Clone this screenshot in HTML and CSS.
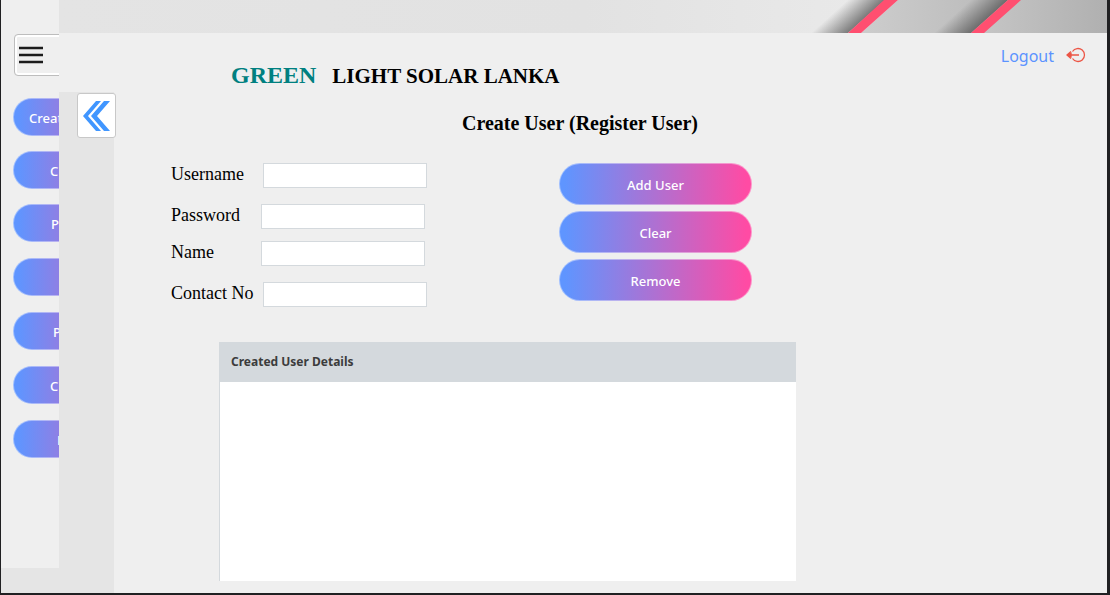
FILE: index.html
```html
<!DOCTYPE html>
<html lang="en">
<head>
<meta charset="utf-8">
<title>Green Light Solar Lanka</title>
<link rel="stylesheet" href="styles.css">
</head>
<body>
<div class="window">
  <aside class="side">
    <nav class="menu">
      <button class="menu-toggle" type="button" aria-label="Menu">
        <svg width="24" height="18" viewBox="0 0 24 18"><path d="M0 2h24M0 9h24M0 16h24" stroke="#1c1c1c" stroke-width="2.4"/></svg>
      </button>
      <div class="menu-list">
        <button class="pill menu-item wide" type="button">Creat</button>
        <button class="pill menu-item" type="button">C</button>
        <button class="pill menu-item mid" type="button">P</button>
        <button class="pill menu-item spaced" type="button"></button>
        <button class="pill menu-item spaced narrow" type="button">P</button>
        <button class="pill menu-item spaced" type="button">C</button>
        <button class="pill menu-item spaced last" type="button">E</button>
      </div>
    </nav>
  </aside>
  <div class="page">
    <div class="banner">
      <svg width="307" height="33" viewBox="800 0 307 33">
        <defs>
          <linearGradient id="mid" gradientUnits="userSpaceOnUse" x1="861" y1="0" x2="971" y2="0"><stop offset="0" stop-color="#cdcdcd"/><stop offset="1" stop-color="#bebebe"/></linearGradient>
          <linearGradient id="end" gradientUnits="userSpaceOnUse" x1="990" y1="0" x2="1107" y2="0"><stop offset="0" stop-color="#c4c4c4"/><stop offset="1" stop-color="#b0b0b0"/></linearGradient>
          <linearGradient id="shade1" gradientUnits="userSpaceOnUse" x1="830" y1="16" x2="848" y2="36"><stop offset="0" stop-color="#707070" stop-opacity="0"/><stop offset="1" stop-color="#707070"/></linearGradient>
          <linearGradient id="shade2" gradientUnits="userSpaceOnUse" x1="953" y1="16" x2="971" y2="36"><stop offset="0" stop-color="#666" stop-opacity="0"/><stop offset="1" stop-color="#666"/></linearGradient>
        </defs>
        <path d="M861 33L898 0H1107V33z" fill="url(#mid)"/>
        <path d="M984 33L1021 0H1107V33z" fill="url(#end)"/>
        <path d="M808 33L844 0H885L848 33z" fill="url(#shade1)"/>
        <path d="M931 33L967 0H1008L971 33z" fill="url(#shade2)"/>
        <path d="M848 33L884 0H898L861 33zM971 33L1008 0H1021L984 33z" fill="#ff4f70"/>
      </svg>
    </div>
    <header class="top">
      <h1 class="brand"><span class="brand-green">GREEN</span><span class="brand-rest">LIGHT SOLAR LANKA</span></h1>
      <a class="logout" href="#">Logout
        <svg width="20" height="16" viewBox="0 0 20 16" fill="none" stroke="#ec5545" stroke-width="1.3"><path d="M1 8H13M5 4.500L1 8L5 11.500M2.500 8L5 6.500V9.500zM6.500 4.500A6.500 6.500 0 1 1 6.500 11.500"/></svg>
      </a>
    </header>
    <div class="body">
      <div class="rail">
        <button class="back" type="button" aria-label="Back">
          <svg width="28" height="30" viewBox="0 0 28 30" fill="#4096ff"><path d="M13 0h5L5 15L18 30h-5L0 15z"/><path d="M21 0h6L14 15L27 30h-6L8 15z"/></svg>
        </button>
      </div>
      <main class="content">
        <h2 class="title">Create User (Register User)</h2>
        <form class="form">
          <div class="fields">
            <div class="field"><label for="username">Username</label><input id="username" type="text"></div>
            <div class="field near"><label for="password">Password</label><input id="password" type="password"></div>
            <div class="field near tight"><label for="name">Name</label><input id="name" type="text"></div>
            <div class="field"><label for="contact">Contact No</label><input id="contact" type="text"></div>
          </div>
          <div class="actions">
            <button class="pill action" type="button">Add User</button>
            <button class="pill action" type="button">Clear</button>
            <button class="pill action" type="button">Remove</button>
          </div>
        </form>
        <section class="details">
          <h3 class="details-title">Created User Details</h3>
        </section>
      </main>
    </div>
  </div>
</div>
</body>
</html>
```

FILE: styles.css
```css
* { box-sizing: border-box; }
body { margin: 0; font-family: "Noto Sans", sans-serif; background: #202022; }
button { font: inherit; }
svg { display: block; }

.window {
  display: flex;
  min-height: 100vh;
  border: solid #202022;
  border-width: 0 3px 2px 1px;
  background: #efefef;
}

.side { display: flex; width: 58px; flex: none; padding-bottom: 25px; background: #e5e5e5; }
.menu { width: 100%; padding-top: 34px; overflow: hidden; background: #efefef; }
.menu-toggle {
  display: flex;
  align-items: center;
  width: 60px;
  height: 42px;
  margin-left: 13px;
  padding: 0 4px;
  border: 1px solid #bdbdbd;
  border-radius: 4px;
  background: #efefef;
  box-shadow: inset 0 0 0 2px #fff;
}
.menu-list { display: flex; flex-direction: column; gap: 15px; margin: 22px 0 0 12px; }

.pill {
  border: 1px solid rgba(255, 255, 255, 0.4);
  border-radius: 21px;
  background: linear-gradient(90deg, #5f95ff 3%, #ff4ba4 97%) border-box;
  color: #fff;
  font-size: 13px;
  font-weight: 500;
  white-space: nowrap;
}
.menu-item { width: 152px; height: 38px; padding: 2px 0 0 36px; text-align: left; }
.menu-item.spaced { margin-top: 1px; }
.menu-item.wide { padding-left: 15px; }
.menu-item.mid { padding-left: 37px; }
.menu-item.narrow { padding-left: 39px; }
.menu-item.last { padding-left: 43px; }

.page { display: flex; flex: 1; flex-direction: column; min-width: 0; }
.banner {
  display: flex;
  justify-content: flex-end;
  height: 33px;
  background: linear-gradient(90deg, #e4e4e4, #e2e2e2 50%, #eaeaea 80%);
}
.top { display: flex; justify-content: space-between; height: 59px; padding: 0 21px 0 172px; }
.brand { display: flex; align-items: baseline; gap: 16px; margin: 26px 0 0; font-family: "Liberation Serif", serif; line-height: 32px; }
.brand-green { color: #008080; font-size: 24px; }
.brand-rest { font-size: 21px; }
.logout { display: flex; gap: 12px; height: 24px; margin-top: 11px; color: #5b93ff; font-size: 16px; line-height: 24px; text-decoration: none; }
.logout svg { margin-top: 3px; }

.body { display: flex; flex: 1; }
.rail { flex: none; width: 55px; padding: 1px 0 0 18px; background: #e5e5e5; }
.back {
  display: grid;
  place-items: center;
  width: 39px;
  height: 45px;
  padding: 0;
  border: 1px solid #c8c8c8;
  border-radius: 3px;
  background: #fff;
}
.content { display: flex; flex: 1; flex-direction: column; padding: 18px 311px 12px 57px; min-width: 0; }
.title { margin: 0 0 0 291px; font-family: "Liberation Serif", serif; font-size: 20px; line-height: 26px; white-space: nowrap; }
.form { display: flex; gap: 132px; margin-top: 27px; }
.fields { display: flex; flex-direction: column; gap: 16px; width: 256px; }
.field { display: flex; }
.field label { width: 92px; font-family: "Liberation Serif", serif; font-size: 18px; line-height: 22px; }
.field.near label { width: 90px; }
.field.tight { margin-top: -4px; }
.field input { width: 164px; height: 25px; padding: 0 6px; border: 1px solid #d4d9dd; background: #fff; font: inherit; font-size: 13px; }
.actions { display: flex; flex-direction: column; gap: 6px; }
.action { width: 193px; height: 42px; padding: 2px 0 0; text-align: center; }

.details { flex: 1; min-height: 200px; margin: 35px 0 0 48px; border-left: 1px solid #d4d9dd; background: #fff; }
.details-title { margin: 0 0 0 -1px; padding: 0 12px; background: #d4d9dd; color: #3c3c3c; font-family: "Noto Sans", sans-serif; font-size: 12px; line-height: 40px; }
```
